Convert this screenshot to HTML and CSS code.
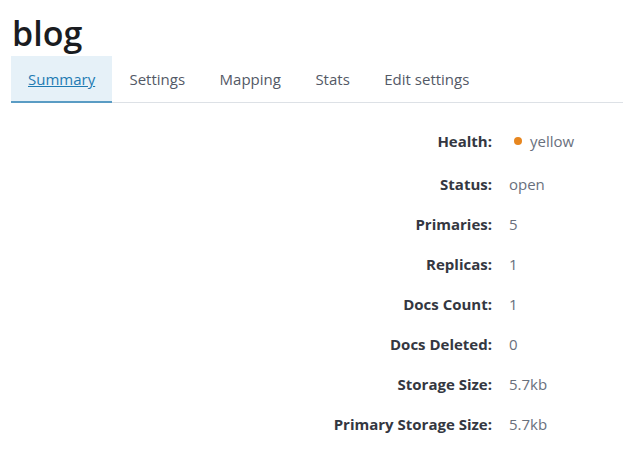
FILE: index.html
```html
<!DOCTYPE html>
<html>
<head>
<meta charset="utf-8">
<link rel="stylesheet" href="styles.css">
</head>
<body>
<div class="page">
  <h1 class="title">blog</h1>
  <nav class="tabs">
    <a class="tab tab-active" href="#"><span class="tab-link">Summary</span></a>
    <a class="tab" href="#">Settings</a>
    <a class="tab" href="#">Mapping</a>
    <a class="tab" href="#">Stats</a>
    <a class="tab" href="#">Edit settings</a>
  </nav>
  <dl class="summary">
    <dt class="label first">Health:</dt>
    <dd class="value first"><span class="dot"></span>yellow</dd>
    <dt class="label">Status:</dt>
    <dd class="value">open</dd>
    <dt class="label">Primaries:</dt>
    <dd class="value">5</dd>
    <dt class="label">Replicas:</dt>
    <dd class="value">1</dd>
    <dt class="label">Docs Count:</dt>
    <dd class="value">1</dd>
    <dt class="label">Docs Deleted:</dt>
    <dd class="value">0</dd>
    <dt class="label">Storage Size:</dt>
    <dd class="value">5.7kb</dd>
    <dt class="label">Primary Storage Size:</dt>
    <dd class="value">5.7kb</dd>
  </dl>
</div>
</body>
</html>
```
FILE: styles.css
```css
html, body {
  margin: 0;
  padding: 0;
  background: #ffffff;
}
body {
  font-family: "Open Sans", "Liberation Sans", sans-serif;
  color: #343741;
}
.page {
  padding: 0 17px 0 11px;
}
.title {
  margin: 10px 0 0 1px;
  font-size: 34px;
  font-weight: 600;
  line-height: 46px;
  color: #1a1c21;
}
.tabs {
  display: flex;
  border-bottom: 1px solid #dde1e6;
}
.tab {
  display: block;
  padding: 12px 17.25px 11px;
  line-height: 22px;
  font-size: 15px;
  color: #535966;
  text-decoration: none;
  border-bottom: 2px solid transparent;
  margin-bottom: -1px;
}
.tab-active {
  background: #e6f1f8;
  border-bottom-color: #5a9cc4;
  padding-left: 17px;
  padding-right: 17px;
}
.tab-link {
  color: #1f7bb3;
  text-decoration: underline;
}
.summary {
  display: grid;
  grid-template-columns: 481px 1fr;
  column-gap: 17px;
  margin: 18px 0 0;
  font-size: 15px;
}
.label, .value {
  margin: 0;
  height: 40px;
  display: flex;
  align-items: center;
}
.label {
  justify-content: flex-end;
  font-weight: 700;
  color: #343741;
}
.value {
  color: #69707d;
}
.first {
  margin-bottom: 3px;
}
.dot {
  display: inline-block;
  width: 8px;
  height: 8px;
  border-radius: 50%;
  background: #e7861f;
  margin: 0 8px 0 5px;
}
```
